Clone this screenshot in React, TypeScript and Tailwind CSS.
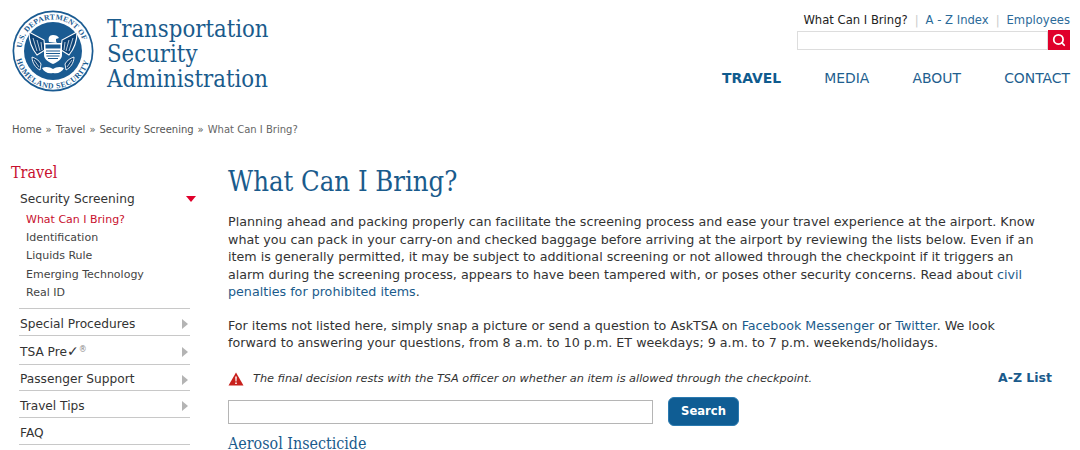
import React from "react";
import { Search } from "lucide-react";

const verdana = "font-['DejaVu_Sans',Verdana,sans-serif]";
const serif = "font-['DejaVu_Serif_Condensed','DejaVu_Serif',serif]";

const subItems = ["Identification", "Liquids Rule", "Emerging Technology", "Real ID"];

function Wing() {
  return (
    <g>
      <path d="M17 22l15 8 1 10-8 5c-5-6-8-14-8-23z" fill="#0d4377" stroke="#fff" strokeWidth="1.1" />
      <path d="M21 28l4 13M25 30l3 11M29 32l1 8" stroke="#fff" strokeWidth=".7" />
      <path d="M20 47c3 1 7 3 9 7l-1 6c-4-2-8-7-8-13z" fill="#0d4377" stroke="#fff" strokeWidth=".9" />
      <path d="M22 50l5 7" stroke="#fff" strokeWidth=".7" />
    </g>
  );
}

function Seal() {
  return (
    <svg width="82" height="82" viewBox="0 0 82 82" className="shrink-0">
      <defs>
        <path id="sealTop" d="M9.5 41a31.5 31.5 0 0 1 63 0" />
        <path id="sealBottom" d="M3.5 41a37.5 37.5 0 0 0 75 0" />
      </defs>
      <circle cx="41" cy="41" r="40.5" fill="#1a5b92" />
      <circle cx="41" cy="41" r="38.8" fill="#fff" />
      <circle cx="41" cy="41" r="29" fill="#1a5b92" />
      <text fontSize="7.6" fill="#1a5b92" fontFamily="Liberation Serif, serif" fontWeight="bold" letterSpacing=".25">
        <textPath href="#sealTop" startOffset="3%">U.S. DEPARTMENT OF</textPath>
      </text>
      <text fontSize="7.8" fill="#1a5b92" fontFamily="Liberation Serif, serif" fontWeight="bold" letterSpacing=".6">
        <textPath href="#sealBottom" startOffset="7%">HOMELAND SECURITY</textPath>
      </text>
      <Wing />
      <g transform="matrix(-1 0 0 1 82 0)">
        <Wing />
      </g>
      {/* head, shield and tail */}
      <path d="M37 32c-1-4 0-7 4-7 3 0 5 1 6 3l-3 1c0 2 0 3 1 4z" fill="#fff" />
      <path d="M32 33h18v12c0 4-4 7-9 9-5-2-9-5-9-9z" fill="#fff" />
      <path d="M33.5 34.5h15v4h-15z" fill="#1a5b92" />
      <path d="M34 41h14M34 43.5h14M34.5 46h13M36 48.5h10" stroke="#1a5b92" strokeWidth="1.1" />
      <path d="M30 58c4-2 8-1 11 1 3-2 7-3 11-1-2 4-6 6-11 5-5 1-9-1-11-5z" fill="#fff" />
    </svg>
  );
}

function Arrow() {
  return <span className="w-0 h-0 border-y-[5px] border-y-transparent border-l-[6px] border-l-[#b4b4b4] mr-[2px]" />;
}

function SideRow({ label, arrow = true, h }: { label: React.ReactNode; arrow?: boolean; h: string }) {
  return (
    <div className={`flex items-center justify-between pt-[5px] pl-[1px] border-b border-[#c8c8c8] w-[171px] ${h}`}>
      <span className="text-[12.2px] text-[#333]">{label}</span>
      {arrow && <Arrow />}
    </div>
  );
}

export default function App() {
  return (
    <div className={`w-[1080px] h-[450px] overflow-hidden bg-white text-[#333] ${verdana}`}>
      {/* Header */}
      <header className="flex justify-between h-[123px] pl-[12px] pr-[10px]">
        <a href="#" className="flex pt-[10px] h-fit">
          <Seal />
          <div className={`ml-[13px] mt-[7px] text-[23.7px] leading-[25px] text-[#1a5b8c] ${serif}`}>
            <div>Transportation</div>
            <div>Security</div>
            <div>Administration</div>
          </div>
        </a>
        <div className="flex flex-col items-end w-[348px]">
          <div className="flex items-center mt-[13px] text-[11.6px] leading-[14px]">
            <span className="text-[#222]">What Can I Bring?</span>
            <span className="mx-[7px] text-[#ccc]">|</span>
            <a href="#" className="text-[#2b6a99]">A - Z Index</a>
            <span className="mx-[7px] text-[#ccc]">|</span>
            <a href="#" className="text-[#2b6a99]">Employees</a>
          </div>
          <div className="flex items-end mt-[3px] w-[273px]">
            <input className="flex-1 h-[19px] border border-[#ddd] min-w-0" />
            <button className="w-[22px] h-[20px] bg-[#e0002b] flex items-center justify-center">
              <Search size={14} strokeWidth={3} className="text-white" />
            </button>
          </div>
          <nav className="flex mt-[19px] text-[13.9px] leading-[18px] text-[#1f5f8f] w-[348px] justify-between">
            <a href="#" className="font-bold text-[#0f5b8e]">TRAVEL</a>
            <a href="#">MEDIA</a>
            <a href="#">ABOUT</a>
            <a href="#">CONTACT</a>
          </nav>
        </div>
      </header>

      {/* Breadcrumb */}
      <div className="flex gap-[4px] pl-[12px] text-[10px] leading-[14px] text-[#555]">
        <span>Home</span>
        <span>»</span>
        <span>Travel</span>
        <span>»</span>
        <span>Security Screening</span>
        <span>»</span>
        <span className="text-[#666]">What Can I Bring?</span>
      </div>

      <div className="flex pl-[11px] mt-[27px]">
        {/* Sidebar */}
        <aside className="w-[217px] shrink-0">
          <div className={`text-[16px] leading-[18px] text-[#c8102e] ${serif}`}>Travel</div>
          <div className="pl-[8px] mt-[8px]">
            <div className="flex items-center justify-between w-[177px] h-[18px]">
              <span className="text-[12.2px] text-[#333] pl-[1px]">Security Screening</span>
              <span className="w-0 h-0 border-x-[5px] border-x-transparent border-t-[6px] border-t-[#e0002b]" />
            </div>
            <div className="pl-[7px] pt-[3px] pb-[6px] border-b border-[#c8c8c8] w-[171px] text-[11px] leading-[18.2px] text-[#444]">
              <div className="text-[#c8102e]">What Can I Bring?</div>
              {subItems.map((s) => (
                <div key={s}>{s}</div>
              ))}
            </div>
            <SideRow label="Special Procedures" h="h-[26.5px]" />
            <SideRow
              label={
                <>
                  TSA Pre<span className="text-[14px] font-bold leading-none">✓</span>
                  <sup className="text-[8px] text-[#888]">®</sup>
                </>
              }
              h="h-[29px]"
            />
            <SideRow label="Passenger Support" h="h-[26px]" />
            <SideRow label="Travel Tips" h="h-[27.5px]" />
            <SideRow label="FAQ" arrow={false} h="h-[26.5px]" />
          </div>
        </aside>

        {/* Main */}
        <main className="w-[824px] -mt-[2px]">
          <h1 className={`pt-[3px] text-[27.2px] leading-[34px] text-[#1a5b8c] ${serif}`}>What Can I Bring?</h1>
          <div className="w-[812px] text-[12.7px] leading-[17.5px] text-[#333]">
            <p className="mt-[14px]">
              Planning ahead and packing properly can facilitate the screening process and ease your travel experience at the airport. Know what you can pack in your carry-on and checked baggage before arriving at the airport by reviewing the lists below. Even if an item is generally permitted, it may be subject to additional screening or not allowed through the checkpoint if it triggers an alarm during the screening process, appears to have been tampered with, or poses other security concerns. Read about{" "}
              <a href="#" className="text-[#1a5b8c]">civil penalties for prohibited items</a>.
            </p>
            <p className="mt-[16px]">
              For items not listed here, simply snap a picture or send a question to AskTSA on{" "}
              <a href="#" className="text-[#1a5b8c]">Facebook Messenger</a> or{" "}
              <a href="#" className="text-[#1a5b8c]">Twitter</a>. We look forward to answering your questions, from 8 a.m. to 10 p.m. ET weekdays; 9 a.m. to 7 p.m. weekends/holidays.
            </p>
          </div>
          <div className="flex items-center justify-between mt-[19px]">
            <div className="flex items-center">
              <svg width="16" height="14" viewBox="0 0 16 14">
                <path d="M8 0.5L15.5 13.5H0.5z" fill="#c8201c" />
                <path d="M7.2 4.5h1.6l-.3 5h-1zM7.2 10.5h1.6v1.6H7.2z" fill="#fff" />
              </svg>
              <span className="ml-[9px] text-[11.3px] italic text-[#333]">
                The final decision rests with the TSA officer on whether an item is allowed through the checkpoint.
              </span>
            </div>
            <a href="#" className="-mt-[2px] text-[12.5px] font-bold text-[#1a5b8c]">A-Z List</a>
          </div>
          <div className="flex items-center mt-[10px]">
            <input className="w-[425px] h-[24px] border border-[#b5b5b5]" />
            <button className="ml-[15px] w-[71px] h-[29px] rounded-[6px] bg-[#0f5d94] border border-[#2a7ab0] text-white text-[11.6px] font-bold">
              Search
            </button>
          </div>
          <div className={`mt-[11px] text-[15.9px] leading-[13px] text-[#1a5b8c] ${serif}`}>Aerosol Insecticide</div>
        </main>
      </div>
    </div>
  );
}
